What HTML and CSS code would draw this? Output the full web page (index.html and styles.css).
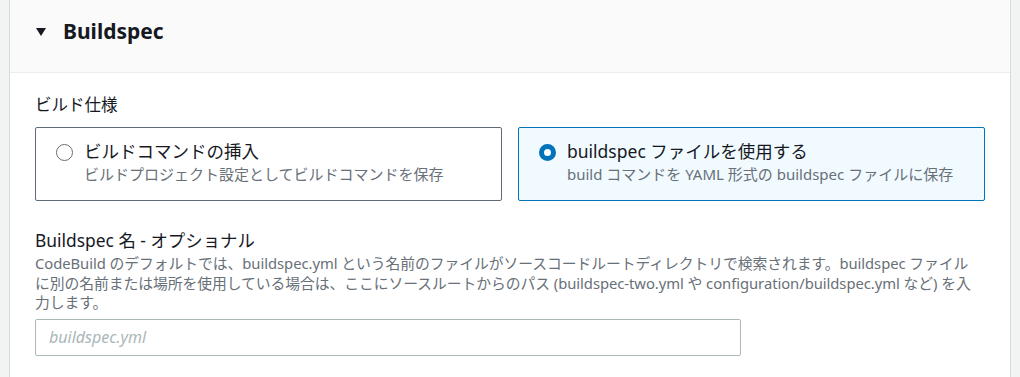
FILE: index.html
```html
<!DOCTYPE html>
<html lang="ja">
<head>
    <meta charset="UTF-8">
    <title>Buildspec</title>
    <link rel="stylesheet" href="styles.css">
</head>
<body>
    <div class="panel">
        <!-- Header -->
        <div class="panel-header">
            <span class="caret"></span>
            <h2 class="panel-title">Buildspec</h2>
        </div>

        <div class="panel-body">
            <!-- Build spec choice -->
            <div class="field-label">ビルド仕様</div>
            <div class="tiles">
                <label class="tile">
                    <span class="radio"></span>
                    <span class="tile-text">
                        <span class="tile-title">ビルドコマンドの挿入</span>
                        <span class="tile-desc">ビルドプロジェクト設定としてビルドコマンドを保存</span>
                    </span>
                </label>
                <label class="tile selected">
                    <span class="radio checked"></span>
                    <span class="tile-text">
                        <span class="tile-title">buildspec ファイルを使用する</span>
                        <span class="tile-desc">build コマンドを YAML 形式の buildspec ファイルに保存</span>
                    </span>
                </label>
            </div>

            <!-- Buildspec name -->
            <div class="name-field">
                <div class="name-label">Buildspec 名 - オプショナル</div>
                <div class="name-desc">CodeBuild のデフォルトでは、buildspec.yml という名前のファイルがソースコードルートディレクトリで検索されます。buildspec ファイル<br>に別の名前または場所を使用している場合は、ここにソースルートからのパス (buildspec-two.yml や configuration/buildspec.yml など) を入<br>力します。</div>
                <input class="name-input" type="text" placeholder="buildspec.yml">
            </div>
        </div>
    </div>
</body>
</html>
```

FILE: styles.css
```css
html, body {
    margin: 0;
    padding: 0;
    background: #f2f3f3;
    font-family: "Noto Sans", "Noto Sans CJK JP", sans-serif;
    color: #16191f;
}
.panel {
    margin: 0 9px 0 9px;
    background: #ffffff;
    border-left: 1px solid #d5dbdb;
    border-right: 1px solid #d5dbdb;
    height: 377px;
    overflow: hidden;
}
.panel-header {
    display: flex;
    align-items: center;
    height: 73px;
    padding: 0 0 10px 25px;
    background: #fafafa;
    border-bottom: 1px solid #eaeded;
    box-sizing: border-box;
}
.caret {
    width: 0;
    height: 0;
    border-left: 5px solid transparent;
    border-right: 5px solid transparent;
    border-top: 8px solid #16191f;
    margin: 1px 17px 0 1px;
}
.panel-title {
    margin: 0;
    font-size: 21px;
    font-weight: bold;
    line-height: 26px;
}
.panel-body {
    padding: 20px 25px 0 25px;
}
.field-label {
    font-size: 16.5px;
    line-height: 24px;
}
.tiles {
    display: flex;
    gap: 16px;
    margin-top: 10px;
}
.tile {
    flex: 1;
    display: flex;
    align-items: flex-start;
    height: 74px;
    box-sizing: border-box;
    padding: 10px 20px 0 20px;
    border: 1px solid #5f6b7a;
    border-radius: 2px;
}
.tile.selected {
    border-color: #0073bb;
    background: #f1faff;
}
.radio {
    width: 17px;
    height: 17px;
    border: 1.5px solid #687078;
    border-radius: 50%;
    box-sizing: border-box;
    margin: 6px 11px 0 0;
    flex-shrink: 0;
    background: #ffffff;
}
.radio.checked {
    border: 5.5px solid #0073bb;
}
.tile-text {
    display: flex;
    flex-direction: column;
}
.tile-title {
    font-size: 17.5px;
    line-height: 26px;
}
.tile-desc {
    font-size: 15px;
    line-height: 20px;
    color: #687078;
}
.name-field {
    margin-top: 27px;
}
.name-label {
    font-size: 17.4px;
    line-height: 24px;
}
.name-desc {
    font-size: 14.8px;
    line-height: 19.5px;
    color: #687078;
    margin-top: 2px;
    white-space: nowrap;
    letter-spacing: -0.05px;
}
.name-input {
    display: block;
    width: 706px;
    height: 37px;
    box-sizing: border-box;
    margin-top: 6px;
    padding: 0 13px;
    border: 1px solid #aab7b8;
    border-radius: 2px;
    font-family: inherit;
    font-size: 16px;
    color: #16191f;
    background: #ffffff;
}
.name-input::placeholder {
    font-style: italic;
    color: #aab7b8;
}
```
